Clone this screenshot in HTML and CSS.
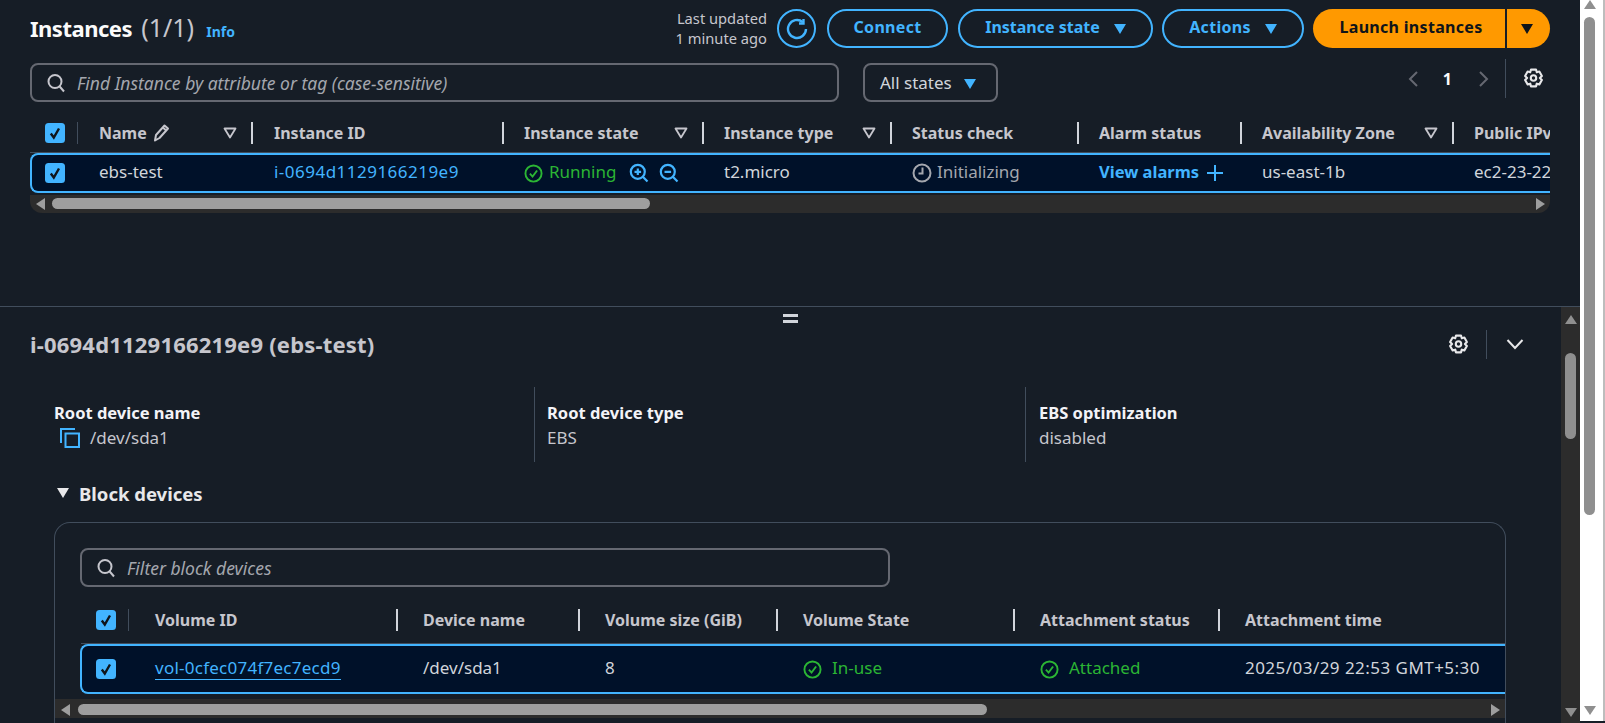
FILE: index.html
```html
<!DOCTYPE html>
<html lang="en">
<head>
  <meta charset="UTF-8">
  <title>Instances</title>
  <link rel="stylesheet" href="styles.css">
</head>
<body>
  <svg class="defs" width="0" height="0">
    <symbol id="i-search" viewBox="0 0 20 20"><circle cx="9" cy="8.5" r="6.5"/><path d="M13.7 13.5 18 18.5"/></symbol>
    <symbol id="i-check" viewBox="0 0 20 20"><circle cx="10" cy="10" r="8.5"/><path d="M6.2 10.2 9 13.2 13.8 6.8"/></symbol>
    <symbol id="i-gear" viewBox="0 0 20 20"><path d="M7.6 1.5h4.800l.7 2.600 2.500-.7 2.400 4.200-1.900 1.900 1.900 1.900-2.400 4.200-2.500-.7-.7 2.600H7.600l-.7-2.600-2.500.7L2 11.400l1.900-1.900L2 7.600l2.400-4.200 2.500.7z" stroke-linejoin="round"/><circle cx="10" cy="9.500" r="2.600"/></symbol>
    <symbol id="i-filter" viewBox="0 0 14 12"><path d="M1.500 1.500h11L7 10.500z" stroke-linejoin="round"/></symbol>
    <symbol id="i-box" viewBox="0 0 20 20"><rect width="20" height="20" rx="3.500" fill="#42b4ff" stroke="none"/><path d="M5.800 10.500 8.800 14.500 14 5.500" stroke="#0f141a" stroke-width="2.400"/></symbol>
  </svg>

  <div class="app">
    <main class="main">
      <section class="top-pane">
        <div class="page-head">
          <h1 class="page-title">Instances <span class="count">(1/1)</span> <a class="info">Info</a></h1>
          <div class="updated">Last updated<br>1 minute ago</div>
          <button class="btn btn-round" aria-label="Refresh">
            <svg class="refresh" width="22" height="22" viewBox="0 0 22 22"><path d="M20 11a9 9 0 1 1-3.200-6.900"/><path d="M17.500 1v4.500H13"/></svg>
          </button>
          <button class="btn btn-connect">Connect</button>
          <button class="btn btn-state">Instance state <i class="caret"></i></button>
          <button class="btn btn-actions">Actions <i class="caret"></i></button>
          <div class="launch">
            <span class="launch-main">Launch instances</span>
            <span class="launch-drop"><i class="caret caret-dark"></i></span>
          </div>
        </div>

        <div class="filter-row">
          <div class="search search-wide">
            <svg class="ic-search"><use href="#i-search"/></svg>
            <span>Find Instance by attribute or tag (case-sensitive)</span>
          </div>
          <div class="select">All states <i class="caret"></i></div>
          <div class="pager">
            <svg class="pg-arrow" width="12" height="18" viewBox="0 0 12 18"><path d="M10 2 3 9l7 7"/></svg>
            <b class="pg-num">1</b>
            <svg class="pg-arrow" width="12" height="18" viewBox="0 0 12 18"><path d="m2 2 7 7-7 7"/></svg>
            <span class="pg-sep"></span>
            <svg class="ic-gear"><use href="#i-gear"/></svg>
          </div>
        </div>

        <div class="table table-inst">
          <div class="thead grid-inst">
            <div class="th th-check"><svg class="checkbox"><use href="#i-box"/></svg></div>
            <div class="th">Name <svg class="pencil" width="18" height="20" viewBox="0 0 18 20"><path d="M3 17.500 4 12 12.500 2.500l3.500 3L7.500 15z" stroke-linejoin="round"/><path d="m10.800 4.500 3.500 3"/></svg><svg class="filter"><use href="#i-filter"/></svg></div>
            <div class="th">Instance ID</div>
            <div class="th">Instance state<svg class="filter"><use href="#i-filter"/></svg></div>
            <div class="th">Instance type<svg class="filter"><use href="#i-filter"/></svg></div>
            <div class="th">Status check</div>
            <div class="th">Alarm status</div>
            <div class="th">Availability Zone<svg class="filter"><use href="#i-filter"/></svg></div>
            <div class="th th-last">Public IPv4 DNS</div>
          </div>
          <div class="row row-inst">
            <div class="td td-check"><svg class="checkbox"><use href="#i-box"/></svg></div>
            <div class="td">ebs-test</div>
            <div class="td"><a class="link wide-id">i-0694d1129166219e9</a></div>
            <div class="td td-green"><svg class="ic-ok"><use href="#i-check"/></svg>Running
              <svg class="zoom zoom-first" width="20" height="20" viewBox="0 0 20 20"><circle cx="8.800" cy="8.800" r="7"/><path d="m13.800 13.800 4.700 4.700M5.500 8.800h6.600M8.800 5.500v6.600"/></svg>
              <svg class="zoom" width="20" height="20" viewBox="0 0 20 20"><circle cx="8.800" cy="8.800" r="7"/><path d="m13.800 13.800 4.700 4.700M5.500 8.800h6.600"/></svg>
            </div>
            <div class="td">t2.micro</div>
            <div class="td td-muted"><svg class="clock" width="20" height="20" viewBox="0 0 20 20"><circle cx="10" cy="10" r="8.500"/><path d="M10.500 4.500v6H6.500"/></svg>Initializing</div>
            <div class="td"><a class="link link-bold">View alarms</a><svg class="plus" width="16" height="16" viewBox="0 0 16 16"><path d="M8 0v16M0 8h16"/></svg></div>
            <div class="td">us-east-1b</div>
            <div class="td td-last">ec2-23-22-10-54.compute-1.amazonaws.com</div>
          </div>
          <div class="hscroll">
            <i class="arrow-left"></i>
            <span class="hthumb hthumb-inst"></span>
            <i class="arrow-right"></i>
          </div>
        </div>
      </section>

      <section class="bottom-pane">
        <div class="handle"></div>
        <div class="detail">
          <div class="detail-head">
            <h2 class="detail-title">i-0694d1129166219e9 (ebs-test)</h2>
            <svg class="ic-gear"><use href="#i-gear"/></svg>
            <span class="detail-sep"></span>
            <svg class="chev" width="18" height="12" viewBox="0 0 18 12"><path d="m1.500 2 7.500 8 7.500-8"/></svg>
          </div>

          <div class="facts">
            <div class="fact">
              <div class="fact-label">Root device name</div>
              <div class="fact-value"><svg class="copy" width="20" height="20" viewBox="0 0 20 20"><path d="M1 15V1h14"/><rect x="5.500" y="5.500" width="13.500" height="13.500"/></svg>/dev/sda1</div>
            </div>
            <div class="fact">
              <div class="fact-label">Root device type</div>
              <div class="fact-value">EBS</div>
            </div>
            <div class="fact">
              <div class="fact-label">EBS optimization</div>
              <div class="fact-value">disabled</div>
            </div>
          </div>

          <div class="section-head"><i class="tri"></i>Block devices</div>

          <div class="card">
            <div class="search search-card">
              <svg class="ic-search"><use href="#i-search"/></svg>
              <span>Filter block devices</span>
            </div>
            <div class="thead grid-vol">
              <div class="th th-check"><svg class="checkbox"><use href="#i-box"/></svg></div>
              <div class="th">Volume ID</div>
              <div class="th">Device name</div>
              <div class="th">Volume size (GiB)</div>
              <div class="th">Volume State</div>
              <div class="th">Attachment status</div>
              <div class="th th-last">Attachment time</div>
            </div>
            <div class="row row-vol">
              <div class="td td-check"><svg class="checkbox"><use href="#i-box"/></svg></div>
              <div class="td"><a class="link link-under">vol-0cfec074f7ec7ecd9</a></div>
              <div class="td">/dev/sda1</div>
              <div class="td">8</div>
              <div class="td td-green"><svg class="ic-ok ic-ok-wide"><use href="#i-check"/></svg>In-use</div>
              <div class="td td-green"><svg class="ic-ok ic-ok-wide"><use href="#i-check"/></svg>Attached</div>
              <div class="td td-last wide-date">2025/03/29 22:53 GMT+5:30</div>
            </div>
            <div class="hscroll hscroll-card">
              <i class="arrow-left"></i>
              <span class="hthumb hthumb-vol"></span>
              <i class="arrow-right"></i>
            </div>
          </div>
        </div>
        <div class="vscroll vscroll-inner">
          <i class="arrow-up"></i>
          <span class="vthumb vthumb-inner"></span>
          <i class="arrow-down"></i>
        </div>
      </section>
    </main>
    <div class="vscroll vscroll-outer">
      <i class="arrow-up"></i>
      <span class="vthumb vthumb-outer"></span>
      <i class="arrow-down"></i>
    </div>
  </div>
</body>
</html>
```

FILE: styles.css
```css
* {
  box-sizing: border-box;
}

html, body {
  margin: 0;
  height: 100%;
  overflow: hidden;
}

body {
  background: #161d26;
  font-family: "Noto Sans", "Open Sans", sans-serif;
  font-size: 17px;
  color: #d1d5db;
}

.defs {
  position: absolute;
}

svg {
  display: block;
  flex: none;
  fill: none;
  stroke: currentColor;
  stroke-width: 2;
}

button {
  font-family: inherit;
}

.app {
  display: flex;
  height: 723px;
}

.main {
  width: 1580px;
  display: flex;
  flex-direction: column;
}

/* top pane */
.top-pane {
  height: 307px;
  padding: 9px 30px 0;
  border-bottom: 1px solid #414d5c;
}

.page-head {
  display: flex;
  align-items: center;
  height: 39px;
}

.page-title {
  margin: 0 auto 4px 0;
  font-size: 22px;
  font-weight: 700;
  letter-spacing: -0.5px;
  color: #fbfbfb;
}

.count {
  margin-left: 4px;
  font-size: 25px;
  font-weight: 400;
  letter-spacing: 0;
  color: #c6c6cd;
}

.info {
  margin-left: 7px;
  font-size: 14px;
  letter-spacing: 0;
  color: #42b4ff;
}

.updated {
  font-size: 14.700px;
  line-height: 20px;
  text-align: right;
  color: #c6c6cd;
  margin: 0 10px 2px 0;
}

.btn {
  height: 39px;
  padding: 0 0 3px;
  background: transparent;
  border: 2px solid #42b4ff;
  border-radius: 20px;
  color: #42b4ff;
  font-size: 16px;
  font-weight: 700;
  display: flex;
  align-items: center;
  justify-content: center;
  gap: 14px;
}

.btn-round { width: 39px; margin-right: 11px; padding: 0; }
.btn-connect { width: 121px; margin-right: 10px; letter-spacing: 0.300px; }
.btn-state { width: 195px; margin-right: 9px; }
.btn-actions { width: 142px; margin-right: 9px; letter-spacing: 0.300px; }

.refresh {
  stroke-width: 2.400;
}

.caret {
  width: 0;
  height: 0;
  margin-top: 3px;
  border-left: 6.500px solid transparent;
  border-right: 6.500px solid transparent;
  border-top: 10px solid #42b4ff;
}

.caret-dark {
  margin-top: 0;
  border-top-color: #0f141a;
}

.launch {
  display: flex;
  width: 237px;
  height: 39px;
  color: #0f141a;
  font-size: 16px;
  font-weight: 700;
  letter-spacing: 0.300px;
}

.launch-main {
  width: 192px;
  padding: 0 0 3px 4px;
  background: #ff9900;
  border-radius: 20px 0 0 20px;
  display: flex;
  align-items: center;
  justify-content: center;
}

.launch-drop {
  flex: 1;
  margin-left: 2px;
  padding-right: 4px;
  background: #ff9900;
  border-radius: 0 20px 20px 0;
  display: flex;
  align-items: center;
  justify-content: center;
}

.filter-row {
  display: flex;
  align-items: flex-start;
  margin-top: 15px;
  height: 39px;
}

.search {
  height: 39px;
  border: 2px solid #656871;
  border-radius: 8px;
  display: flex;
  align-items: center;
  gap: 11px;
  padding-left: 14px;
  font-size: 17.500px;
  font-style: italic;
  color: #a4a7ae;
}

.search-wide {
  width: 809px;
}

.ic-search {
  width: 20px;
  height: 20px;
  color: #c6c6cd;
}

.select {
  width: 135px;
  height: 39px;
  margin-left: 24px;
  border: 2px solid #656871;
  border-radius: 8px;
  display: flex;
  align-items: center;
  gap: 12px;
  padding-left: 15px;
  color: #d1d5db;
}

.pager {
  margin-left: auto;
  margin-top: -4px;
  height: 39px;
  display: flex;
  align-items: center;
  color: #fbfbfb;
}

.pg-arrow {
  color: #656871;
}

.pg-num {
  margin: 0 26px 0 24px;
  font-size: 16px;
}

.pg-sep {
  width: 1px;
  height: 39px;
  background: #414d5c;
  margin: 0 17px 0 15px;
}

.ic-gear {
  width: 21px;
  height: 21px;
  color: #e8e8ea;
  margin-right: 6px;
}

/* tables */
.table-inst {
  margin-top: 20px;
}

.grid-inst {
  display: grid;
  grid-template-columns: 48px 175px 251px 200px 188px 187px 163px 212px 96px;
}

.grid-vol {
  display: grid;
  grid-template-columns: 48px 269px 182px 198px 237px 205px 260px;
}

.thead {
  height: 31px;
  border-bottom: 1px solid #414d5c;
  font-weight: 700;
  color: #c6c6cd;
  font-size: 16px;
}

.th {
  height: 22px;
  padding: 0 0 1px 21px;
  border-right: 2px solid #d1d5db;
  display: flex;
  align-items: center;
  white-space: nowrap;
  overflow: hidden;
}

.th-check {
  padding: 0 0 0 15px;
  border-right: 1px solid #414d5c;
}

.th-last {
  border-right: 0;
}

.checkbox {
  width: 20px;
  height: 20px;
}

.filter {
  width: 14px;
  height: 12px;
  margin-left: auto;
  margin-right: 14px;
  color: #c6c6cd;
  stroke-width: 1.800;
}

.pencil {
  margin-left: 5px;
}

.row {
  display: grid;
  height: 40px;
  background: #001129;
  border: 2px solid #42b4ff;
  border-right: 0;
  border-radius: 8px 0 0 8px;
  overflow: hidden;
}

.row-inst {
  grid-template-columns: 46px 175px 251px 200px 188px 187px 163px 212px 96px;
}

.row-vol {
  grid-template-columns: 47px 269px 182px 198px 237px 205px 260px;
}

.td {
  padding: 0 0 3px 21px;
  display: flex;
  align-items: center;
  white-space: nowrap;
  color: #d1d5db;
  overflow: hidden;
}

.td-check {
  padding: 0 0 0 13px;
}

.grid-inst .th:nth-child(n+4), .row-inst .td:nth-child(n+4) {
  padding-left: 20px;
}

.td-green {
  color: #2bb534;
}

.td-muted {
  color: #a4a7ae;
}

.link {
  color: #42b4ff;
}

.link-bold {
  font-size: 16.500px;
  font-weight: 700;
}

.link-under {
  border-bottom: 1px solid #42b4ff;
  letter-spacing: 0.250px;
}

.wide-id {
  letter-spacing: 0.480px;
}

.wide-date {
  letter-spacing: 0.460px;
}

.ic-ok {
  width: 19px;
  height: 19px;
  margin: 3px 6px 0 0;
}

.ic-ok-wide {
  margin-right: 10px;
}

.zoom {
  color: #42b4ff;
  margin: 3px 0 0 10px;
  stroke-width: 2.200;
}

.zoom-first {
  margin-left: 13px;
}

.clock {
  color: #a4a7ae;
  margin: 3px 5px 0 0;
}

.plus {
  color: #42b4ff;
  margin: 3px 0 0 8px;
}

.hscroll {
  height: 18px;
  margin-top: 2px;
  background: #2c2c2c;
  border-radius: 0 0 12px 12px;
  display: flex;
  align-items: center;
  padding: 0 5px 1px 6px;
}

.hthumb {
  height: 11px;
  background: #9e9e9e;
  border-radius: 6px;
}

.hthumb-inst {
  width: 598px;
  margin-left: 7px;
}

.hthumb-vol {
  width: 909px;
  margin-left: 8px;
}

.arrow-left, .arrow-right {
  width: 0;
  height: 0;
  border-top: 6px solid transparent;
  border-bottom: 6px solid transparent;
}

.arrow-left {
  border-right: 9px solid #9e9e9e;
}

.arrow-right {
  margin-left: auto;
  border-left: 9px solid #9e9e9e;
}

/* bottom pane */
.bottom-pane {
  flex: 1;
  display: flex;
  min-height: 0;
  position: relative;
}

.handle {
  position: absolute;
  left: 783px;
  top: 7px;
  width: 15px;
  height: 9px;
  border-top: 3px solid #d1d5db;
  border-bottom: 3px solid #d1d5db;
}

.detail {
  flex: 1;
  min-width: 0;
  padding: 22px 0 0 30px;
  overflow: hidden;
}

.detail-head {
  display: flex;
  align-items: center;
  height: 30px;
  padding-right: 37px;
}

.detail-title {
  margin: 0 auto 0 0;
  font-size: 22px;
  font-weight: 700;
  letter-spacing: 0.200px;
  color: #c6c6cd;
}

.detail-head .ic-gear {
  margin-right: 0;
}

.detail-sep {
  width: 1px;
  height: 29px;
  background: #414d5c;
  margin: 0 19px 0 17px;
}

.chev {
  color: #e8e8ea;
}

.facts {
  display: grid;
  grid-template-columns: 504px 491px 400px;
  margin: 28px 0 0 0;
}

.fact {
  height: 75px;
  padding: 13px 0 0 13px;
  border-left: 1px solid #414d5c;
  line-height: 25px;
}

.fact:first-child {
  padding-left: 24px;
  border-left: 0;
}

.fact:nth-child(2) {
  padding-left: 12px;
}

.fact-label {
  font-size: 16.500px;
  font-weight: 700;
  color: #f3f3f7;
}

.fact-value {
  display: flex;
  align-items: center;
  gap: 10px;
  color: #c6c6cd;
}

.copy {
  color: #42b4ff;
  margin-left: 6px;
}

.section-head {
  display: flex;
  align-items: center;
  gap: 10px;
  margin: 19px 0 0 27px;
  height: 24px;
  font-size: 18.500px;
  font-weight: 700;
  color: #e8e8ea;
}

.tri {
  width: 0;
  height: 0;
  border-left: 6px solid transparent;
  border-right: 6px solid transparent;
  border-top: 10px solid #e8e8ea;
}

.card {
  width: 1452px;
  margin: 17px 0 0 24px;
  padding-top: 25px;
  height: 210px;
  border: 1px solid #414d5c;
  border-bottom: 0;
  border-radius: 16px 16px 0 0;
}

.search-card {
  width: 810px;
  margin-left: 25px;
}

.card .thead {
  margin: 22px 0 0 26px;
  height: 35px;
}

.card .th:not(.th-check), .card .td:not(.td-check) {
  padding-left: 25px;
}

.card .th:nth-child(2), .card .td:nth-child(2) {
  padding-left: 26px;
}

.card .row {
  height: 50px;
  margin-left: 25px;
}

.card .td-check {
  padding-left: 14px;
}

.hscroll-card {
  height: 19px;
  margin-top: 5px;
  padding: 2px 5px 0 6px;
  border-radius: 0;
}

/* vertical scrollbars */
.vscroll {
  display: flex;
  flex-direction: column;
  align-items: center;
  flex: none;
}

.vscroll-inner {
  width: 19px;
  background: #2c2c2c;
  padding: 8px 0 6px;
}

.vscroll-outer {
  width: 25px;
  height: 721px;
  background: #fff;
  border-right: 2px solid #bdbdbd;
  padding: 0 4px 6px 0;
}

.vthumb {
  width: 11px;
  background: #8f8f8f;
  border-radius: 6px;
}

.vthumb-inner {
  height: 86px;
  margin-top: 29px;
}

.vthumb-outer {
  height: 498px;
  margin-top: 8px;
}

.arrow-up, .arrow-down {
  width: 0;
  height: 0;
  border-left: 6px solid transparent;
  border-right: 6px solid transparent;
}

.arrow-up {
  border-bottom: 9px solid #8f8f8f;
}

.arrow-down {
  margin-top: auto;
  border-top: 9px solid #8f8f8f;
}
```
